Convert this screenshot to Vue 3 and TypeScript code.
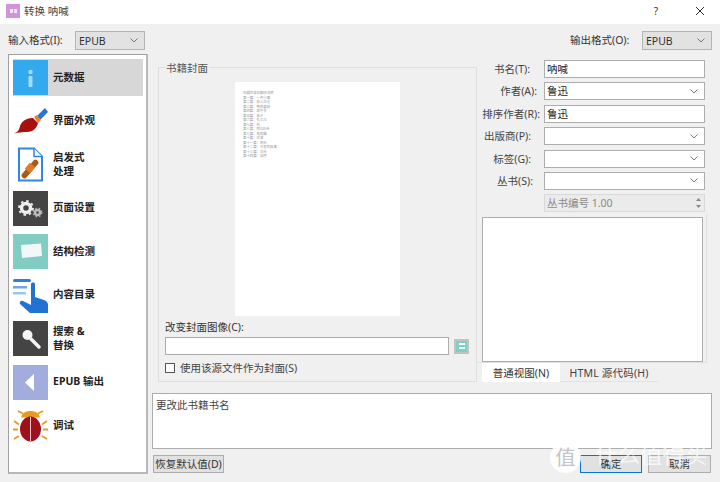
<script setup lang="ts">
type NavItem = { id: string; label: string[] };
type FieldRow = { label: string; kind: "input" | "combo"; value: string; pad: number };

const navItems: NavItem[] = [
  { id: "info", label: ["元数据"] },
  { id: "brush", label: ["界面外观"] },
  { id: "heuristic", label: ["启发式", "处理"] },
  { id: "page", label: ["页面设置"] },
  { id: "structure", label: ["结构检测"] },
  { id: "toc", label: ["内容目录"] },
  { id: "search", label: ["搜索 &", "替换"] },
  { id: "output", label: ["EPUB 输出"] },
  { id: "debug", label: ["调试"] }
];

const fields: FieldRow[] = [
  { label: "书名(T):", kind: "input", value: "呐喊", pad: 11 },
  { label: "作者(A):", kind: "combo", value: "鲁迅", pad: 4 },
  { label: "排序作者(R):", kind: "input", value: "鲁迅", pad: 1 },
  { label: "出版商(P):", kind: "combo", value: "", pad: 10 },
  { label: "标签(G):", kind: "combo", value: "", pad: 10 },
  { label: "丛书(S):", kind: "combo", value: "", pad: 8 }
];

const coverLines = [
  "呐喊目录及翻译说明",
  "第一篇：一件小事",
  "第二篇：狂人日记",
  "第三篇：鸭的喜剧",
  "第四篇：端午节",
  "第五篇：故乡",
  "第六篇：孔乙己",
  "第七篇：药",
  "第八篇：阿Q正传",
  "第九篇：兔和猫",
  "第十篇：风波",
  "第十一篇：明天",
  "第十二篇：头发的故事",
  "第十三篇：白光",
  "第十四篇：自序"
];
</script>

<template>
  <div class="window">
    <header class="titlebar">
      <span class="app-icon"><i></i><i></i></span>
      <span class="title">转换 呐喊</span>
      <span class="help">?</span>
      <svg class="close" width="10" height="10" viewBox="0 0 10 10">
        <path d="M1 1l8 8M9 1l-8 8" stroke="#333" stroke-width="1" fill="none" />
      </svg>
    </header>

    <div class="format-row">
      <div class="format">
        <label>输入格式(I):</label>
        <div class="format-combo">
          EPUB
          <svg class="chev" width="8" height="5" viewBox="0 0 8 5"><path d="M.5.5L4 4 7.5.5" /></svg>
        </div>
      </div>
      <div class="format">
        <label>输出格式(O):</label>
        <div class="format-combo">
          EPUB
          <svg class="chev" width="8" height="5" viewBox="0 0 8 5"><path d="M.5.5L4 4 7.5.5" /></svg>
        </div>
      </div>
    </div>

    <div class="body">
      <nav class="sidebar">
        <div v-for="item in navItems" :key="item.id" class="nav-item" :class="{ active: item.id === 'info' }">
          <svg class="nav-icon" width="35" height="35" viewBox="0 0 35 35">
            <template v-if="item.id === 'info'">
              <rect width="35" height="35" fill="#33aaee" />
              <circle cx="17.5" cy="12" r="2.2" fill="#a6dcf8" />
              <rect x="15.5" y="16" width="4" height="11" rx="1" fill="#a6dcf8" />
            </template>
            <template v-else-if="item.id === 'brush'">
              <path d="M24 12l8-8 3 4-8 8z" fill="#2874d8" />
              <path d="M21 13l3-2 4 5-3 3z" fill="#e8822c" />
              <path d="M20 14l5 5c-1 5-5 9-11 9-5 0-9 .5-13 1.500 4-2 5-3 6-7 1-5 7-9 13-8.500z" fill="#a80f0f" />
            </template>
            <template v-else-if="item.id === 'heuristic'">
              <path d="M6 1.500h15l8 8v24h-23z" fill="#fff" stroke="#2f86e4" stroke-width="2" />
              <path d="M21 1.500v8h8" fill="#fff" stroke="#2f86e4" stroke-width="1.500" />
              <path d="M9 27l12-14c2-2 6 2 4 4l-12 14c-2 2-6-2-4-4z" fill="#a85a1c" />
              <rect x="13.500" y="17" width="7" height="8" transform="rotate(40 17 21)" fill="#e07a2a" />
            </template>
            <template v-else-if="item.id === 'page'">
              <rect width="35" height="35" fill="#444" />
              <circle cx="13" cy="17" r="4.500" fill="none" stroke="#eee" stroke-width="3.500" />
              <circle cx="13" cy="17" r="7" fill="none" stroke="#eee" stroke-width="1.800" stroke-dasharray="2.500 3" />
              <circle cx="24.500" cy="21.500" r="2.500" fill="none" stroke="#bbb" stroke-width="2.500" />
              <circle cx="24.500" cy="21.500" r="4.300" fill="none" stroke="#bbb" stroke-width="1.200" stroke-dasharray="1.500 2" />
            </template>
            <template v-else-if="item.id === 'structure'">
              <rect width="35" height="35" fill="#82cdc3" />
              <path d="M8 11l20-1.500 1 12.500-20 2z" fill="#f2f8f7" />
            </template>
            <template v-else-if="item.id === 'toc'">
              <rect x="0" y="1" width="18" height="3" rx="1.500" fill="#2f7fdc" />
              <rect x="0" y="8" width="14" height="2.500" fill="#6ea8ea" />
              <rect x="0" y="14" width="13" height="2.500" fill="#9cc4f0" />
              <path d="M18 6c0-2 4-2 4 0v13l9 3c3 1 4 3 4 5v8h-18l-10-9c-1-2 1-4 3-3l8 4z" fill="#2272d4" />
            </template>
            <template v-else-if="item.id === 'search'">
              <rect width="35" height="35" fill="#444" />
              <circle cx="14.500" cy="14" r="5" fill="#f4f4f4" />
              <path d="M18 18l8 8" stroke="#f4f4f4" stroke-width="3.500" stroke-linecap="round" />
            </template>
            <template v-else-if="item.id === 'output'">
              <rect width="35" height="35" fill="#a3addd" />
              <path d="M21 9v17l-9-8.500z" fill="#fff" />
            </template>
            <template v-else>
              <path d="M8 9.500c1-4.500 5-6.500 9.500-6.500s8.500 2 9.500 6.500z" fill="#e89a1e" />
              <path d="M5 3l5 2.500M30 3l-5 2.500M1 13l5 3.500M34 13l-5 3.500M0 21.500h5M35 21.500h-5M1 31l5-3M34 31l-5-3" stroke="#e89a1e" stroke-width="1.800" />
              <ellipse cx="17.500" cy="21" rx="10.500" ry="12.500" fill="#a0101c" />
              <path d="M17.500 9v24" stroke="#f4c8c8" stroke-width="1" />
            </template>
          </svg>
          <span class="nav-label">
            <span v-for="line in item.label" :key="line">{{ line }}</span>
          </span>
        </div>
      </nav>

      <main class="content">
        <div class="upper">
          <section class="cover-group">
            <div class="group-title">书籍封面</div>
            <div class="cover-page">
              <div v-for="line in coverLines" :key="line" class="cover-line">{{ line }}</div>
            </div>
            <div class="cover-label">改变封面图像(C):</div>
            <div class="cover-file">
              <div class="field file-input"></div>
              <div class="browse"><span></span></div>
            </div>
            <div class="cover-check">
              <span class="checkbox"></span>
              <span>使用该源文件作为封面(S)</span>
            </div>
          </section>

          <section class="meta">
            <div class="meta-form">
              <template v-for="row in fields" :key="row.label">
                <label class="meta-label" :style="{ paddingRight: `${row.pad}px` }">{{ row.label }}</label>
                <div class="field">
                  <span>{{ row.value }}</span>
                  <svg v-if="row.kind === 'combo'" class="chev" width="8" height="5" viewBox="0 0 8 5"><path d="M.5.5L4 4 7.5.5" /></svg>
                </div>
              </template>
              <div></div>
              <div class="field spin">
                <span>丛书编号 1.00</span>
                <span class="spin-arrows">
                  <svg width="5" height="3" viewBox="0 0 5 3"><path d="M2.500 0L5 3H0z" fill="#888" /></svg>
                  <svg width="5" height="3" viewBox="0 0 5 3"><path d="M2.500 3L5 0H0z" fill="#888" /></svg>
                </span>
              </div>
            </div>
            <div class="editor-frame">
              <div class="editor"></div>
            </div>
            <div class="tabs">
              <span class="tab active">普通视图(N)</span>
              <span class="tab">HTML 源代码(H)</span>
            </div>
          </section>
        </div>

        <div class="description">更改此书籍书名</div>

        <div class="actions">
          <button type="button" class="btn restore">恢复默认值(D)</button>
          <div class="action-right">
            <button type="button" class="btn primary">确定</button>
            <button type="button" class="btn cancel">取消</button>
          </div>
        </div>
      </main>
    </div>

    <div class="watermark">
      <span class="mark-circle">值</span>
      <span class="mark-text">什么值得买</span>
    </div>
  </div>
</template>

<style>
body {
  margin: 0;
}
</style>

<style scoped>
.window {
  position: relative;
  width: 720px;
  height: 482px;
  overflow: hidden;
  display: flex;
  flex-direction: column;
  background: #f0f0f0;
  color: #333;
  font-family: "Noto Sans", "Noto Sans CJK SC", sans-serif;
  font-size: 10.500px;
  line-height: 14px;
}

.titlebar {
  height: 24px;
  flex: none;
  display: flex;
  align-items: center;
  padding-left: 6px;
  background: #fff;
}

.app-icon {
  width: 14px;
  height: 14px;
  margin-top: -3px;
  display: flex;
  align-items: center;
  justify-content: center;
  gap: 1px;
  background: #cf94da;
}

.app-icon i {
  width: 3px;
  height: 4px;
  background: #f3e3f6;
}

.title {
  margin-left: 4px;
  margin-top: -2px;
  color: #444;
}

.help {
  margin-left: auto;
  margin-top: -3px;
  font-size: 10px;
}

.close {
  margin: -3px 15px 0 37px;
}

.format-row {
  height: 30px;
  flex: none;
  display: flex;
  justify-content: space-between;
  padding: 7px 8px 0;
  box-sizing: border-box;
}

.format {
  display: flex;
  align-items: flex-start;
}

.format label {
  width: 67px;
  line-height: 19px;
  white-space: nowrap;
}

.format:last-child label {
  width: 72px;
}

.format-combo {
  width: 70px;
  height: 19px;
  box-sizing: border-box;
  display: flex;
  align-items: center;
  justify-content: space-between;
  padding: 0 6px 0 3px;
  border: 1px solid #b4b4b4;
  background: #e2e2e2;
}

.chev {
  flex: none;
  fill: none;
  stroke: #777;
  stroke-width: 1;
}

.body {
  display: flex;
  gap: 4px;
  padding: 0 8px;
}

.sidebar {
  width: 140px;
  height: 420px;
  box-sizing: border-box;
  padding-top: 4px;
  border: 1px solid #a8a8a8;
  border-width: 1px 2px 2px 1px;
  border-color: #a0a0a0 #b8b8b8 #b8b8b8 #a0a0a0;
  background: #fff;
}

.nav-item {
  height: 37px;
  margin: 0 3px 6.500px 4px;
  display: flex;
  align-items: center;
  gap: 5px;
}

.nav-item.active {
  background: #d7d7d7;
}

.nav-icon {
  flex: none;
}

.nav-label {
  margin-top: -2px;
  display: flex;
  flex-direction: column;
  color: #222;
  font-weight: 700;
}

.content {
  width: 560px;
}

.upper {
  height: 339px;
  display: flex;
}

.cover-group {
  width: 319px;
  height: 315px;
  margin: 13px 0 0 6px;
  box-sizing: border-box;
  border: 1px solid #dfdfdf;
  padding: 0 0 0 6px;
}

.group-title {
  width: max-content;
  margin-top: -7px;
  padding: 0 1px;
  background: #f0f0f0;
  color: #555;
}

.cover-page {
  width: 165px;
  height: 234px;
  margin: 7px 0 0 70px;
  box-sizing: border-box;
  padding: 9px 0 0 8px;
  background: #fff;
}

.cover-line {
  font-size: 3.400px;
  line-height: 4.500px;
  color: #999;
  white-space: nowrap;
}

.cover-label {
  margin-top: 4px;
}

.cover-file {
  margin-top: 3px;
  display: flex;
  align-items: center;
  gap: 5px;
}

.field {
  height: 18px;
  box-sizing: border-box;
  display: flex;
  align-items: center;
  justify-content: space-between;
  padding: 0 6px 0 2px;
  border: 1px solid #adadad;
  background: #fff;
  color: #222;
}

.file-input {
  width: 284px;
}

.browse {
  width: 15px;
  height: 15px;
  box-sizing: border-box;
  display: grid;
  place-items: center;
  border: 2px solid #c2c2c2;
  background: #7fcfc4;
}

.browse span {
  width: 6px;
  height: 6px;
  background: linear-gradient(#fff 0 2px, transparent 2px 4px, #fff 4px);
}

.cover-check {
  margin-top: 6px;
  display: flex;
  align-items: center;
  gap: 5px;
  color: #444;
}

.checkbox {
  width: 10px;
  height: 10px;
  box-sizing: border-box;
  border: 1px solid #555;
  background: #fff;
}

.meta {
  width: 235px;
  padding-top: 6px;
}

.meta-form {
  display: grid;
  grid-template-columns: 64px 161px;
  gap: 4.400px 3px;
}

.meta-label {
  line-height: 18px;
  text-align: right;
  white-space: nowrap;
  color: #444;
  justify-self: end;
}

.spin {
  background: #ebebeb;
  border-color: #d9d9d9;
  color: #8a8a8a;
  padding-right: 3px;
}

.spin-arrows {
  display: flex;
  flex-direction: column;
  gap: 4px;
}

.spin-arrows svg {
  display: block;
}

.editor-frame {
  width: 230px;
  height: 149px;
  margin-top: 2px;
  box-sizing: border-box;
  padding: 3px 3px 1px 5px;
  border: 1px solid #e2e2e2;
  border-width: 0 1px 1px 0;
}

.editor {
  width: 221px;
  height: 145px;
  box-sizing: border-box;
  border: 1px solid #adadad;
  background: #fff;
}

.tabs {
  height: 19px;
  display: flex;
  padding-left: 5px;
}

.tab {
  width: 98px;
  box-sizing: border-box;
  padding-top: 3px;
  border-bottom: 1px solid #e2e2e2;
  text-align: center;
  color: #444;
  white-space: nowrap;
  letter-spacing: 0.2px;
}

.tab.active {
  width: 78px;
  border: 0;
  background: #fff;
  color: #333;
  letter-spacing: 0;
}

.description {
  height: 56px;
  box-sizing: border-box;
  padding: 4px 3px;
  border: 1px solid #adadad;
  background: #fff;
  color: #444;
}

.actions {
  margin-top: 6px;
  display: flex;
  justify-content: space-between;
  padding: 0 1px;
}

.action-right {
  display: flex;
  gap: 6px;
}

.btn {
  height: 18px;
  box-sizing: border-box;
  padding: 0;
  border: 1px solid #adadad;
  background: #e1e1e1;
  color: #333;
  font: inherit;
  white-space: nowrap;
}

.restore {
  width: 71px;
}

.primary {
  width: 62px;
  border-color: #0078d7;
}

.cancel {
  width: 63px;
}

.watermark {
  position: absolute;
  left: 550px;
  top: 442px;
  display: flex;
  align-items: center;
  gap: 14px;
  pointer-events: none;
}

.mark-circle {
  width: 31px;
  height: 31px;
  display: grid;
  place-items: center;
  border-radius: 50%;
  background: rgba(255, 255, 255, 0.92);
  color: #c4c4c4;
  font-size: 20px;
}

.mark-text {
  margin-top: -6px;
  color: rgba(255, 255, 255, 0.72);
  font-size: 22.500px;
  line-height: 24px;
  white-space: nowrap;
}
</style>
